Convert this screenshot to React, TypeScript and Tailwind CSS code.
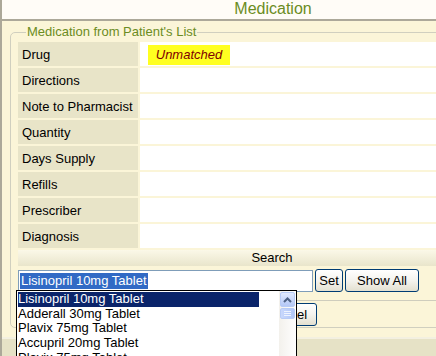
const rows = [
  'Drug',
  'Directions',
  'Note to Pharmacist',
  'Quantity',
  'Days Supply',
  'Refills',
  'Prescriber',
  'Diagnosis',
]

const drugs = [
  'Lisinopril 10mg Tablet',
  'Adderall 30mg Tablet',
  'Plavix 75mg Tablet',
  'Accupril 20mg Tablet',
  'Plavix 75mg Tablet',
]

function XpButton({ label, className = '' }: { label: string; className?: string }) {
  return (
    <button
      className={`h-[23px] rounded-[3px] border border-[#003c74] bg-gradient-to-b from-white via-[#f4f3ee] to-[#e3e0d0] text-[13px] text-black leading-none ${className}`}
    >
      {label}
    </button>
  )
}

export default function App() {
  return (
    <div
      className="relative w-[436px] h-[356px] overflow-hidden bg-[#fbf5d8] border-l-2 border-[#aca899]"
      style={{ fontFamily: '"Liberation Sans", Arial, sans-serif' }}
    >
      <div className="w-[540px]">
        {/* header */}
        <div className="h-[21px] bg-[#fffcf7] border-b-2 border-[#aca899] flex justify-center">
          <h1 className="text-[16px] leading-[18px] text-[#6b8c23] pl-[2px]">Medication</h1>
        </div>

        {/* fieldset */}
        <fieldset className="mx-[8px] mt-[4px] h-[303px] border border-[#d0cfbf] rounded-[5px] px-[7px] pt-0">
          <legend className="ml-[8px] px-[1px] text-[13px] leading-[14px] text-[#6b8c23]">
            Medication from Patient's List
          </legend>

          <div className="flex flex-col gap-[2px] mt-[3px]">
            {rows.map(r => (
              <div key={r} className="flex gap-[2px] h-[24px]">
                <div className="w-[120px] bg-[#e8e4c8] text-[13px] text-black pl-[4px] pt-[1px] flex items-center">
                  {r}
                </div>
                <div className="flex-1 bg-white flex items-center">
                  {r === 'Drug' && (
                    <span className="ml-[8px] mt-[2px] h-[20px] w-[82px] bg-[#ffff20] text-[#800000] italic text-[13px] flex items-center justify-center">
                      Unmatched
                    </span>
                  )}
                </div>
              </div>
            ))}
          </div>

          <div className="mt-[2px] h-[16px] bg-gradient-to-b from-[#fbf8e8] to-[#e9e5cb] text-[13px] leading-[16px] text-black text-center">
            Search
          </div>

          <div className="flex items-center gap-[2px] mt-[3px]">
            <div className="w-[295px] h-[22px] border border-[#7f9db9] bg-white flex items-center pl-[1px]">
              <span className="bg-[#316ac5] text-white text-[13px] leading-[16px] px-[1px]">Lisinopril 10mg Tablet</span>
            </div>
            <XpButton label="Set" className="w-[28px]" />
            <XpButton label="Show All" className="w-[74px]" />
          </div>

          <div className="mt-[8px] border-t border-[#cfcdbd] pt-[2px] flex gap-[4px] pl-[179px]">
            <XpButton label="OK" className="w-[56px] h-[22px]" />
            <XpButton label="Cancel" className="w-[60px] h-[22px]" />
          </div>
        </fieldset>

        {/* footer bar */}
        <div className="mt-[9px] border-t-2 border-[#f3f0e0] h-[20px] bg-[#e6e2c6]" />
      </div>

      {/* dropdown list */}
      <div className="absolute left-[14px] top-[290px] w-[281px] h-[80px] border border-black bg-white flex">
        <div className="flex-1 pt-[1px] pl-[1px]">
          {drugs.map((d, i) => (
            <div
              key={i}
              className={`w-[241px] h-[14.67px] text-[13px] leading-[14.67px] ${i === 0 ? 'bg-[#0a246a] text-white' : 'text-black'}`}
            >
              {d}
            </div>
          ))}
        </div>
        <div className="w-[17px] bg-gradient-to-r from-[#f3f1ec] to-[#fefefe] pt-[1px]">
          <div className="h-[15px] mx-[1px] rounded-[2px] border border-[#b8cbf5] bg-gradient-to-b from-[#e2eafe] to-[#b4c8f6] flex items-center justify-center">
            <svg width="9" height="6" viewBox="0 0 9 6">
              <path d="M1 5 L4.5 1.5 L8 5" stroke="#4d6185" strokeWidth="2" fill="none" />
            </svg>
          </div>
          <div className="h-[11px] mx-[1px] mt-[1px] rounded-[2px] border border-[#b8cbf5] bg-gradient-to-r from-[#c9d8fc] to-[#b0c6f7] flex flex-col items-center justify-center gap-[1px]">
            <div className="w-[7px] h-px bg-[#eef3fe]" />
            <div className="w-[7px] h-px bg-[#eef3fe]" />
            <div className="w-[7px] h-px bg-[#eef3fe]" />
          </div>
        </div>
      </div>
    </div>
  )
}
